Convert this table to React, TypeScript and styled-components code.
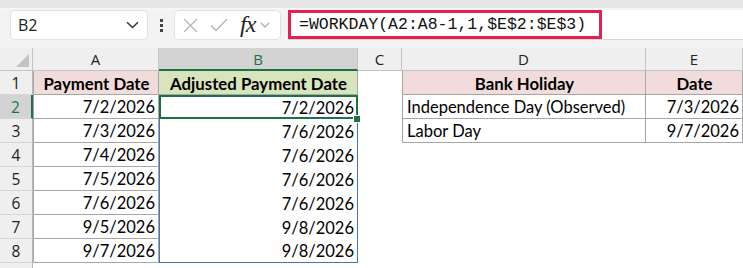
import styled, { createGlobalStyle, css } from 'styled-components'

const GlobalStyle = createGlobalStyle`
	html, body {
		margin: 0;
		padding: 0;
		background: #ffffff;
	}
	body {
		width: 743px;
		height: 268px;
		overflow: hidden;
	}
`

const GREEN = '#1e7145'
const TABLE_LINE = '#a6a6a6'
const SPILL = '#4472c4'

const Window = styled.div`
	width: 743px;
	height: 268px;
	display: flex;
	flex-direction: column;
	background: #f3f3f3;
	font-family: 'Lato', 'Liberation Sans', sans-serif;
`

const TopStrip = styled.div`
	height: 8px;
	background: #e6e6e6;
	border-bottom: 1px solid #f7f7f7;
	flex: none;
`

const FormulaBar = styled.div`
	height: 30px;
	margin-top: 1px;
	display: flex;
	align-items: stretch;
	padding-left: 10px;
	flex: none;
`

const NameBox = styled.div`
	width: 138px;
	box-sizing: border-box;
	background: #ffffff;
	border: 1px solid #e2e2e2;
	border-radius: 5px;
	display: flex;
	align-items: center;
	justify-content: space-between;
	padding: 0 8px 0 7px;
	font-family: 'Open Sans', 'Liberation Sans', sans-serif;
	font-size: 16px;
	color: #222;
`

const Grip = styled.div`
	width: 26px;
	display: flex;
	flex-direction: column;
	align-items: center;
	justify-content: center;
	gap: 2px;

	span {
		width: 3px;
		height: 3px;
		background: #444;
	}
`

const FnBox = styled.div`
	width: 107px;
	box-sizing: border-box;
	background: #ffffff;
	border: 1px solid #e2e2e2;
	border-radius: 5px;
	display: flex;
	align-items: center;
	padding-left: 8px;
	gap: 12px;
`

const FxGroup = styled.span`
	display: flex;
	align-items: center;
	gap: 5px;
`

const FxLabel = styled.span`
	font-family: 'Liberation Serif', serif;
	font-style: italic;
	font-weight: 400;
	font-size: 24px;
	line-height: 1;
	color: #222;
	letter-spacing: -1px;
	margin-top: -2px;
`

const FormulaInput = styled.div`
	flex: 1;
	margin-left: 7px;
	background: #ffffff;
	border-bottom: 1px solid #d6d6d6;
	display: flex;
	align-items: stretch;
`

const Highlight = styled.div`
	width: 314px;
	box-sizing: border-box;
	border: 3px solid #e3214e;
	display: flex;
	align-items: center;
	padding-left: 8px;
	font-family: 'Liberation Mono', monospace;
	font-size: 16.5px;
	color: #111;
	white-space: nowrap;
`

const Sheet = styled.div`
	margin-top: 8px;
	display: grid;
	grid-template-columns: 33px 126px 199px 44px 244px 97px;
	grid-template-rows: 23px repeat(8, 24px) 1fr;
	flex: 1;
	background: #ffffff;
`

const Corner = styled.div`
	background: #efefef;
	border-right: 1px solid #c4c4c4;
	border-bottom: 1px solid #c4c4c4;
	position: relative;

	&::after {
		content: '';
		position: absolute;
		right: 3px;
		bottom: 3px;
		width: 0;
		height: 0;
		border-left: 13px solid transparent;
		border-bottom: 13px solid #c2c2c2;
	}
`

const ColHead = styled.div<{ $active?: boolean }>`
	box-sizing: border-box;
	display: flex;
	align-items: center;
	justify-content: center;
	font-family: 'Open Sans', 'Liberation Sans', sans-serif;
	font-size: 15px;
	background: ${(p) => (p.$active ? '#d3d3d3' : '#efefef')};
	color: ${(p) => (p.$active ? GREEN : '#222')};
	border-right: 1px solid #c4c4c4;
	border-bottom: ${(p) => (p.$active ? `2px solid ${GREEN}` : '1px solid #c4c4c4')};
	padding-top: ${(p) => (p.$active ? '1px' : '0')};
`

const RowHead = styled.div<{ $active?: boolean }>`
	box-sizing: border-box;
	display: flex;
	align-items: center;
	justify-content: center;
	font-family: 'Open Sans', 'Liberation Sans', sans-serif;
	font-size: 15.5px;
	background: ${(p) => (p.$active ? '#d3d3d3' : '#efefef')};
	color: ${(p) => (p.$active ? GREEN : '#222')};
	border-right: ${(p) => (p.$active ? `2px solid ${GREEN}` : '1px solid #b8b8b8')};
	border-bottom: 1px solid #d6d6d6;
`

const Filler = styled(RowHead)`
	border-bottom: none;
`

type Fill = 'pink' | 'green' | 'none'

const fills: Record<Fill, string> = {
	pink: '#f2dcdb',
	green: '#d8e4bc',
	none: '#ffffff',
}

const Cell = styled.div<{
	$fill?: Fill
	$bold?: boolean
	$align?: 'left' | 'right' | 'center'
	$boxed?: boolean
	$left?: boolean
}>`
	box-sizing: border-box;
	position: relative;
	display: flex;
	align-items: center;
	padding: 1px 3px 0 4px;
	white-space: nowrap;
	font-size: ${(p) => (p.$bold ? '16.8px' : '16.5px')};
	color: #000;
	background: ${(p) => fills[p.$fill ?? 'none']};
	font-weight: ${(p) => (p.$bold ? 700 : 400)};
	justify-content: ${(p) =>
		p.$align === 'right' ? 'flex-end' : p.$align === 'center' ? 'center' : 'flex-start'};
	${(p) =>
		p.$boxed &&
		css`
			border-right: 1px solid ${TABLE_LINE};
			border-bottom: 1px solid ${TABLE_LINE};
		`}
	${(p) => p.$left && `border-left: 1px solid ${TABLE_LINE};`}
`

const SpillCell = styled(Cell)<{ $first?: boolean; $last?: boolean }>`
	border-left: 1px solid ${SPILL};
	border-right: 1px solid ${SPILL};
	${(p) => p.$last && `border-bottom: 1px solid ${SPILL};`}
	${(p) =>
		p.$first &&
		css`
			outline: 2px solid ${GREEN};
			outline-offset: -2px;
			&::after {
				content: '';
				position: absolute;
				right: -4px;
				bottom: -4px;
				width: 6px;
				height: 6px;
				background: ${GREEN};
				border: 1px solid #ffffff;
				z-index: 2;
			}
		`}
`

const paymentDates = ['7/2/2026', '7/3/2026', '7/4/2026', '7/5/2026', '7/6/2026', '9/5/2026', '9/7/2026']
const adjustedDates = ['7/2/2026', '7/6/2026', '7/6/2026', '7/6/2026', '7/6/2026', '9/8/2026', '9/8/2026']
const holidays: [string, string][] = [
	['Independence Day (Observed)', '7/3/2026'],
	['Labor Day', '9/7/2026'],
]

const Chevron = ({ size = 12, color = '#333' }: { size?: number; color?: string }) => (
	<svg width={size} height={size * 0.6} viewBox="0 0 12 7" fill="none">
		<path d="M1 1l5 5 5-5" stroke={color} strokeWidth="1.3" />
	</svg>
)

export default function App() {
	return (
		<>
			<GlobalStyle />
			<Window>
				<TopStrip />
				<FormulaBar>
					<NameBox>
						<span>B2</span>
						<Chevron size={13} />
					</NameBox>
					<Grip>
						<span />
						<span />
						<span />
					</Grip>
					<FnBox>
						<svg width="15" height="15" viewBox="0 0 15 15">
							<path d="M1 1l13 13M14 1L1 14" stroke="#b5b5b5" strokeWidth="1.3" />
						</svg>
						<svg width="18" height="14" viewBox="0 0 18 14">
							<path d="M1 7.5l5 5L17 1" stroke="#b5b5b5" strokeWidth="1.3" fill="none" />
						</svg>
						<FxGroup>
							<FxLabel>fx</FxLabel>
							<Chevron size={10} color="#999" />
						</FxGroup>
					</FnBox>
					<FormulaInput>
						<Highlight>=WORKDAY(A2:A8-1,1,$E$2:$E$3)</Highlight>
					</FormulaInput>
				</FormulaBar>

				<Sheet>
					<Corner />
					<ColHead>A</ColHead>
					<ColHead $active>B</ColHead>
					<ColHead>C</ColHead>
					<ColHead>D</ColHead>
					<ColHead>E</ColHead>

					<RowHead>1</RowHead>
					<Cell $fill="pink" $bold $align="center" $boxed $left>
						Payment Date
					</Cell>
					<Cell $fill="green" $bold $align="center" $boxed>
						Adjusted Payment Date
					</Cell>
					<Cell />
					<Cell $fill="pink" $bold $align="center" $boxed $left>
						Bank Holiday
					</Cell>
					<Cell $fill="pink" $bold $align="center" $boxed>
						Date
					</Cell>

					{paymentDates.map((d, i) => (
						<Row key={d + i} index={i} payment={d} adjusted={adjustedDates[i]} />
					))}

					<Filler />
				</Sheet>
			</Window>
		</>
	)
}

const Row = ({
	index,
	payment,
	adjusted,
}: {
	index: number
	payment: string
	adjusted: string
}) => {
	const holiday = holidays[index]
	return (
		<>
			<RowHead $active={index === 0}>{index + 2}</RowHead>
			<Cell $align="right" $boxed $left>
				{payment}
			</Cell>
			<SpillCell $align="right" $first={index === 0} $last={index === paymentDates.length - 1}>
				{adjusted}
			</SpillCell>
			<Cell />
			{holiday ? (
				<>
					<Cell $boxed $left>
						{holiday[0]}
					</Cell>
					<Cell $align="right" $boxed>
						{holiday[1]}
					</Cell>
				</>
			) : (
				<>
					<Cell />
					<Cell />
				</>
			)}
		</>
	)
}
